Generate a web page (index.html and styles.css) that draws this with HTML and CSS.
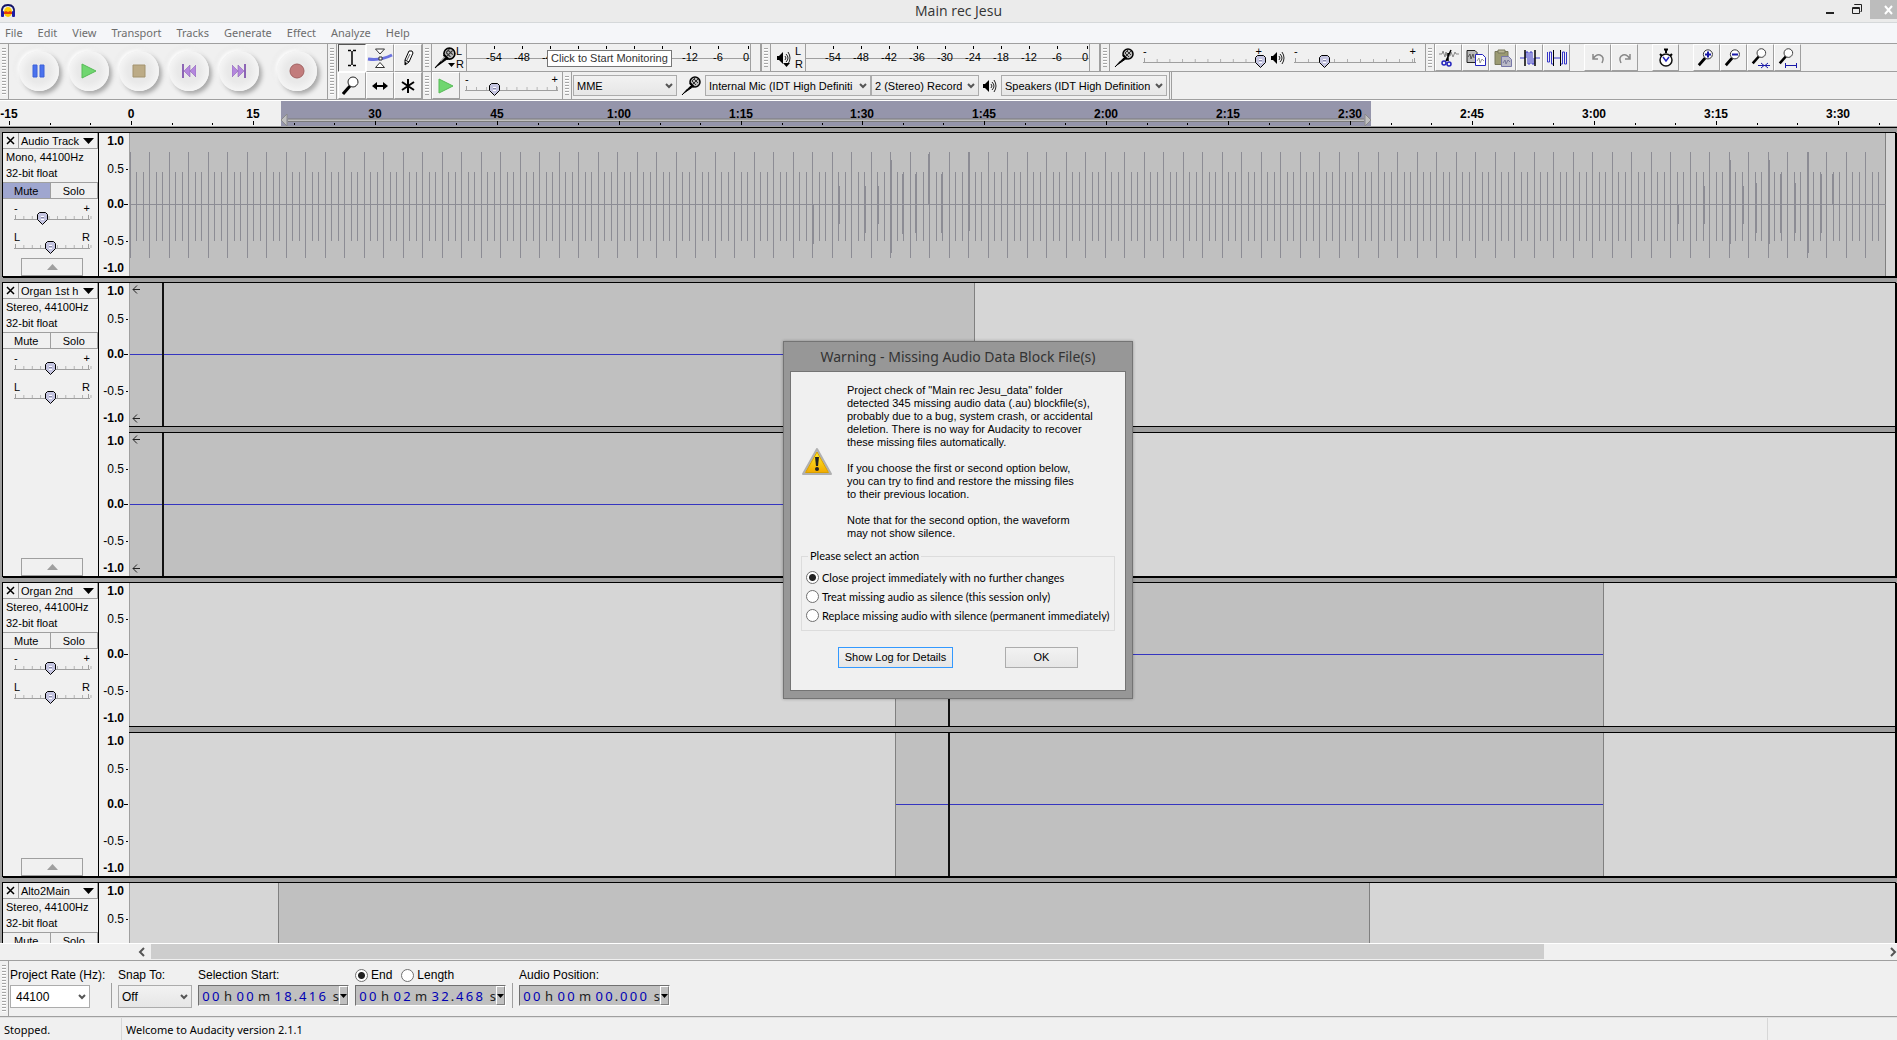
FILE: index.html
```html
<!DOCTYPE html>
<html lang="en">
<head>
    <meta charset="UTF-8">
    <meta name="viewport" content="width=device-width, initial-scale=1.0">
    <title>Main rec Jesu</title>
    <link rel="stylesheet" href="styles.css">
</head>
<body>
    <svg class="symbols" aria-hidden="true">
        <symbol id="mic" viewBox="0 0 20 20">
            <path d="M1 19 L11 8 L13 10 L3 17 Z" fill="#000" stroke="#000"/>
            <circle cx="14" cy="6" r="5" fill="#bbb" stroke="#000" stroke-width="1.500"/>
            <path d="M11 5 l4 4 M13 3 l4 4 M12 8 l5 -5 M11 5 l3 -3" stroke="#333"/>
            <path d="M9 7 l4 4" stroke="#000" stroke-width="2"/>
            <path d="M6 13 l4 -4" stroke="#aaa"/>
        </symbol>
        <symbol id="speaker" viewBox="0 0 14 14">
            <path d="M0 5 h2 l4 -4 v12 l-4 -4 h-2 z" fill="#000"/>
            <path d="M8 5 q2 2 0 4 M9 3 q4 4 0 8 M11 1 q4 6 0 12" fill="none" stroke="#222"/>
        </symbol>
        <symbol id="chevron" viewBox="0 0 8 6">
            <path d="M1 1 l3 3 l3 -3" fill="none" stroke="#555" stroke-width="2"/>
        </symbol>
        <symbol id="lens" viewBox="0 0 22 22">
            <path d="M2 19 L9 11" stroke="#000" stroke-width="3"/>
            <circle cx="12" cy="7" r="5" fill="#fff" stroke="#222"/>
            <path d="M14 11 q3 -1 3 -4" fill="none" stroke="#888"/>
        </symbol>
        <symbol id="play" viewBox="0 0 16 16">
            <path d="M1 1 L15 8 L1 15 Z" fill="#70d670" stroke="#57bb57"/>
        </symbol>
        <symbol id="prev" viewBox="0 0 14 16">
            <path d="M1 1 v14" stroke="#8d65b5" stroke-width="2"/>
            <path d="M8 2 v12 L2 8 Z M14 2 v12 L8 8 Z" fill="#b487dd" stroke="#8d65b5" stroke-width=".6"/>
        </symbol>
    </svg>

    <header class="titlebar">
        <div class="app-icon">
            <svg width="16" height="16" viewBox="0 0 16 16">
                <ellipse cx="8" cy="9" rx="4" ry="5" fill="#fc0"/>
                <path d="M4 9 l2 -1 l2 1 l2 -1 l2 1 v2 h-8 z" fill="#e33c10"/>
                <path d="M2 10 Q1 2 8 2 Q15 2 14 10" fill="none" stroke="#131368" stroke-width="2"/>
                <rect x="1" y="8" width="3" height="6" rx="1" fill="#1d1da5"/>
                <rect x="12" y="8" width="3" height="6" rx="1" fill="#1d1da5"/>
            </svg>
        </div>
        <div class="title">Main rec Jesu</div>
        <div class="window-buttons">
            <button type="button" aria-label="Minimize"><svg width="12" height="12"><path d="M2 10 h8" stroke="#222" stroke-width="2"/></svg></button>
            <button type="button" aria-label="Restore"><svg width="12" height="12"><path d="M1.500 4.500 h7 v6 h-7 z M1 5.500 h8 M3.500 2 v-.5 h7 v7 h-1" fill="none" stroke="#222"/></svg></button>
            <button type="button" class="close" aria-label="Close"><svg width="10" height="10"><path d="M1 1 l7 8 M8 1 l-7 8" stroke="#fff" stroke-width="2"/></svg></button>
        </div>
    </header>

    <nav class="menubar">
        <a href="#">File</a>
        <a href="#">Edit</a>
        <a href="#">View</a>
        <a href="#">Transport</a>
        <a href="#">Tracks</a>
        <a href="#">Generate</a>
        <a href="#">Effect</a>
        <a href="#">Analyze</a>
        <a href="#">Help</a>
    </nav>

    <div class="toolbars">
        <div class="grip"></div>
        <div class="transport">
            <button type="button" aria-label="Pause"><svg width="14" height="14"><path d="M1 1 h4 v12 h-4 z M8 1 h4 v12 h-4 z" fill="#4a72ee" stroke="#3d61d8"/></svg></button>
            <button type="button" aria-label="Play"><svg width="16" height="16"><use href="#play"/></svg></button>
            <button type="button" aria-label="Stop"><svg width="14" height="14"><path d="M1 1 h12 v12 h-12 z" fill="#bcab86" stroke="#a3936f"/></svg></button>
            <button type="button" aria-label="Skip to Start"><svg width="14" height="16"><use href="#prev"/></svg></button>
            <button type="button" aria-label="Skip to End"><svg class="flip" width="14" height="16"><use href="#prev"/></svg></button>
            <button type="button" class="record" aria-label="Record"><svg width="16" height="16"><circle cx="8" cy="8" r="7" fill="#c27c7c" stroke="#a26262"/></svg></button>
        </div>
        <div class="grip"></div>
        <div class="tools">
            <button type="button" class="tool active" aria-label="Selection Tool"><svg width="20" height="20"><path d="M6 2.500 h3 M11 2.500 h3 M6 17.500 h3 M11 17.500 h3 M10 3 v14" stroke="#000" stroke-width="1.500"/></svg></button>
            <button type="button" class="tool" aria-label="Envelope Tool"><svg width="26" height="22"><path d="M1 12 q12 2 24 -4" fill="none" stroke="#6a72e0" stroke-width="3"/><path d="M8.500 2 h9 l-4.500 5 z M8.500 20.500 h9 l-4.500 -5 z M12 10 h3 v3 h-3 z" fill="#fff" stroke="#333"/></svg></button>
            <button type="button" class="tool" aria-label="Draw Tool"><svg width="20" height="20"><path d="M7 17 l0 -5 l4 -9 h3 l1 2 l-4 9 z M7 12 l4 2" fill="#fff" stroke="#000"/><path d="M7 17 v-3 l2 1 z"/><path d="M12 6 l-3 6" stroke="#555"/></svg></button>
            <button type="button" class="tool" aria-label="Zoom Tool"><svg width="20" height="20" viewBox="1 1 20 20"><use href="#lens" width="22" height="22"/></svg></button>
            <button type="button" class="tool" aria-label="Time Shift Tool"><svg width="18" height="12"><path d="M4 6 h10" stroke="#000" stroke-width="2"/><path d="M1 6 l5 -4 v8 z M17 6 l-5 -4 v8 z"/></svg></button>
            <button type="button" class="tool" aria-label="Multi-Tool"><svg width="16" height="16"><path d="M8 1 v14 M2 4 l12 8 M14 4 l-12 8" stroke="#000" stroke-width="2"/></svg></button>
        </div>
        <div class="toolbar-rows">
            <div class="toolbar-row">
                <div class="grip"></div>
                <div class="meter-icon">
                    <svg width="22" height="22"><use href="#mic"/></svg>
                    <svg class="drop" width="7" height="4"><path d="M0 0 h7 l-3.500 4 z"/></svg>
                    <div class="lr"><span>L</span><span>R</span></div>
                </div>
                <div class="meter">
                    <span>-54</span><span>-48</span><span>-42</span><span>-36</span><span>-30</span><span>-24</span><span>-18</span><span>-12</span><span>-6</span><span class="zero">0</span>
                    <div class="tooltip">Click to Start Monitoring</div>
                </div>
                <div class="spacer"></div>
                <div class="grip"></div>
                <div class="meter-icon output">
                    <svg width="14" height="14"><use href="#speaker"/></svg>
                    <svg class="drop" width="7" height="4"><path d="M0 0 h7 l-3.500 4 z"/></svg>
                    <div class="lr"><span>L</span><span>R</span></div>
                </div>
                <div class="meter">
                    <span>-54</span><span>-48</span><span>-42</span><span>-36</span><span>-30</span><span>-24</span><span>-18</span><span>-12</span><span>-6</span><span class="zero">0</span>
                </div>
                <div class="spacer"></div>
                <div class="grip"></div>
                <div class="mixer">
                    <svg width="20" height="20"><use href="#mic"/></svg>
                    <div class="slider recording">
                        <div class="marks"><span>-</span><span>+</span></div>
                        <input type="range" value="100" aria-label="Recording Volume">
                    </div>
                    <svg width="14" height="14"><use href="#speaker"/></svg>
                    <div class="slider">
                        <div class="marks"><span>-</span><span>+</span></div>
                        <input type="range" value="24" aria-label="Playback Volume">
                    </div>
                </div>
                <div class="grip"></div>
                <div class="edit">
                    <button type="button" class="tool" aria-label="Cut"><svg width="20" height="20"><path d="M0 6 h3 l1 -3 l2 6 l1 -5 l1 4 h3 l1 -4 l2 5 l2 -5 l1 2 h3" fill="none" stroke="#888"/><path d="M7 13 L12 2 M9 13 L9 5" stroke="#000" stroke-width="1.500"/><circle cx="5" cy="15" r="2" fill="none" stroke="#2424bd" stroke-width="1.500"/><circle cx="10" cy="16" r="2" fill="none" stroke="#2424bd" stroke-width="1.500"/></svg></button>
                    <button type="button" class="tool" aria-label="Copy"><svg width="20" height="20"><path d="M1 2.500 h8 l2 2 v10 h-10 z" fill="#bbb" stroke="#222"/><path d="M2 9 l2 -3 l1 5 l2 -5 l1 4" fill="none" stroke="#555"/><path d="M9.500 6.500 h7 l3 3 v8 h-10 z" fill="#fff" stroke="#2424bd"/><path d="M11 13 l2 -3 l1 5 l2 -4 l2 2" fill="none" stroke="#999"/></svg></button>
                    <button type="button" class="tool" aria-label="Paste"><svg width="20" height="20"><path d="M2 3.500 h13 v13 h-13 z" fill="#9b9a72" stroke="#77775a"/><path d="M5 2 h7 v3 h-7 z" fill="#bbb897" stroke="#77775a"/><path d="M8.500 8.500 h7 l3 3 v7 h-10 z" fill="#b9b9c6" stroke="#7777a8"/><path d="M10 15 l2 -3 l1 4 l2 -4 l2 2" fill="none" stroke="#77779a"/></svg></button>
                    <button type="button" class="tool" aria-label="Trim"><svg width="20" height="20"><path d="M0 10 h5 M15 10 h5 M6 10 v-6 h2 v12 h2 v-12 h2 v12 h2 v-6" fill="none" stroke="#3535c8"/><path d="M5 2 v16 M15 2 v16" stroke="#000" stroke-width="1.500"/></svg></button>
                    <button type="button" class="tool" aria-label="Silence"><svg width="20" height="20"><path d="M.5 4 v10 h2 v-10 h2 v12 h2 v-12 M13.500 4 v12 h2 v-12 h2 v12 h2 v-12 M6 10 h8" fill="none" stroke="#3535c8"/><path d="M6.500 2 v16 M13.500 2 v16" stroke="#000"/></svg></button>
                    <button type="button" class="tool group" aria-label="Undo"><svg width="16" height="14"><path d="M3 3 v5 h5 M3 8 q3 -5 7 -4 q5 2 2 8" fill="none" stroke="#888" stroke-width="1.500"/></svg></button>
                    <button type="button" class="tool" aria-label="Redo"><svg class="flip" width="16" height="14"><path d="M3 3 v5 h5 M3 8 q3 -5 7 -4 q5 2 2 8" fill="none" stroke="#888" stroke-width="1.500"/></svg></button>
                    <button type="button" class="tool group" aria-label="Sync-Lock"><svg width="18" height="22"><circle cx="9" cy="13" r="6" fill="#fff" stroke="#111" stroke-width="1.500"/><path d="M7 2.500 h4 M9 2 v4 M3 7 l2 2 M15 7 l-2 2" stroke="#000" stroke-width="2"/><path d="M6 10 l3 4 l3 -4" fill="none" stroke="#2424bd" stroke-width="1.500"/></svg></button>
                    <button type="button" class="tool group" aria-label="Zoom In"><svg width="20" height="20"><use href="#lens"/><path d="M8 6.500 h6 M11 3.500 v6" stroke="#1919a8" stroke-width="2"/></svg></button>
                    <button type="button" class="tool" aria-label="Zoom Out"><svg width="20" height="20"><use href="#lens"/><path d="M8 6.500 h6" stroke="#1919a8" stroke-width="2"/></svg></button>
                    <button type="button" class="tool" aria-label="Fit Selection"><svg width="20" height="22"><use href="#lens" width="19" height="19"/><path d="M7 18.500 h12 M10 16 l3 2.500 l-3 2.500 M17 16 l-3 2.500 l3 2.500" fill="none" stroke="#1919a8"/></svg></button>
                    <button type="button" class="tool" aria-label="Fit Project"><svg width="20" height="22"><use href="#lens" width="19" height="19"/><path d="M7.500 16 v5 M18.500 16 v5 M8 18.500 h10" fill="none" stroke="#1919a8"/></svg></button>
                </div>
            </div>
            <div class="toolbar-row">
                <div class="grip"></div>
                <button type="button" class="tool wide" aria-label="Play-at-Speed"><svg width="16" height="16"><use href="#play"/></svg></button>
                <div class="slider speed">
                    <div class="marks"><span>-</span><span>+</span></div>
                    <input type="range" value="31" aria-label="Playback Speed">
                </div>
                <div class="grip"></div>
                <div class="devices">
                    <div class="combo host"><select aria-label="Audio Host"><option>MME</option></select><svg width="8" height="6"><use href="#chevron"/></svg></div>
                    <svg class="device-icon" width="20" height="20"><use href="#mic"/></svg>
                    <div class="combo device"><select aria-label="Recording Device"><option>Internal Mic (IDT High Definiti</option></select><svg width="8" height="6"><use href="#chevron"/></svg></div>
                    <div class="combo channels"><select aria-label="Recording Channels"><option>2 (Stereo) Record</option></select><svg width="8" height="6"><use href="#chevron"/></svg></div>
                    <svg class="device-icon" width="14" height="14"><use href="#speaker"/></svg>
                    <div class="combo device"><select aria-label="Playback Device"><option>Speakers (IDT High Definition</option></select><svg width="8" height="6"><use href="#chevron"/></svg></div>
                </div>
            </div>
        </div>
    </div>

    <svg class="timeline" id="timeline"></svg>

    <main class="tracks" id="tracks"></main>

    <div class="scrollbar">
        <svg width="8" height="10"><path d="M6 1 l-4 4 l4 4" fill="none" stroke="#555" stroke-width="2"/></svg>
        <div class="scroll-track"><div class="scroll-thumb" style="width: 80.4%"></div></div>
        <svg width="8" height="10"><path d="M2 1 l4 4 l-4 4" fill="none" stroke="#555" stroke-width="2"/></svg>
    </div>

    <div class="selection-bar">
        <div class="grip"></div>
        <div class="field rate">
            <label for="rate">Project Rate (Hz):</label>
            <div class="combo white"><select id="rate"><option>44100</option></select><svg width="8" height="6"><use href="#chevron"/></svg></div>
        </div>
        <div class="rule"></div>
        <div class="field snap">
            <label for="snap">Snap To:</label>
            <div class="combo"><select id="snap"><option>Off</option></select><svg width="8" height="6"><use href="#chevron"/></svg></div>
        </div>
        <div class="field">
            <div class="label">Selection Start:</div>
            <div class="time" data-time="00h00m18.416s"></div>
        </div>
        <div class="field">
            <div class="label">
                <label><input type="radio" name="end" checked>End</label>
                <label><input type="radio" name="end">Length</label>
            </div>
            <div class="time" data-time="00h02m32.468s"></div>
        </div>
        <div class="rule"></div>
        <div class="field">
            <div class="label">Audio Position:</div>
            <div class="time" data-time="00h00m00.000s"></div>
        </div>
    </div>

    <footer class="statusbar">
        <div class="state">Stopped.</div>
        <div class="message">Welcome to Audacity version 2.1.1</div>
        <div class="rate-info"></div>
    </footer>

    <div class="dialog" role="dialog" aria-labelledby="dialog-title">
        <h1 id="dialog-title">Warning - Missing Audio Data Block File(s)</h1>
        <form class="dialog-body">
            <div class="warning">
                <svg width="32" height="28" viewBox="0 0 32 28">
                    <defs><linearGradient id="amber" x1="0" y1="0" x2="0" y2="1"><stop offset="0" stop-color="#ffee2c"/><stop offset="1" stop-color="#f2ab00"/></linearGradient></defs>
                    <path d="M16 1 L30 26 H2 Z" fill="#ccc" stroke="#b0b0b0" stroke-width="2" stroke-linejoin="round"/>
                    <path d="M16 4 L27.500 24.500 H4.500 Z" fill="url(#amber)" stroke="#d9a000"/>
                    <path d="M14 9 h4 l-1 9 h-2 z" fill="#222"/>
                    <circle cx="16" cy="21" r="2" fill="#222"/>
                </svg>
                <div>
                    <p>Project check of "Main rec Jesu_data" folder<br>detected 345 missing audio data (.au) blockfile(s),<br>probably due to a bug, system crash, or accidental<br>deletion. There is no way for Audacity to recover<br>these missing files automatically.</p>
                    <p>If you choose the first or second option below,<br>you can try to find and restore the missing files<br>to their previous location.</p>
                    <p>Note that for the second option, the waveform<br>may not show silence.</p>
                </div>
            </div>
            <fieldset>
                <legend>Please select an action</legend>
                <label><input type="radio" name="action" checked>Close project immediately with no further changes</label>
                <label><input type="radio" name="action">Treat missing audio as silence (this session only)</label>
                <label><input type="radio" name="action">Replace missing audio with silence (permanent immediately)</label>
            </fieldset>
            <div class="dialog-buttons">
                <button type="button" class="focused">Show Log for Details</button>
                <button type="button" class="ok">OK</button>
            </div>
        </form>
    </div>

    <script src="script.js"></script>
</body>
</html>
```
FILE: styles.css
```css
* {
    box-sizing: border-box;
}
body {
    margin: 0;
    height: 100vh;
    display: flex;
    flex-direction: column;
    overflow: hidden;
    background-color: #f0f0f0;
    color: #000;
    font-family: "Liberation Sans", Arial, sans-serif;
    font-size: 12px;
}
button, select, input {
    font: inherit;
    color: inherit;
    margin: 0;
}
button {
    padding: 0;
}
svg {
    display: block;
    flex: none;
}
.symbols {
    position: absolute;
    width: 0;
    height: 0;
}
.flip {
    transform: scaleX(-1);
}

/* Title bar and menu */
.titlebar {
    display: flex;
    align-items: center;
    flex: none;
    height: 23px;
    background-color: #ebebeb;
    border-bottom: 1px solid #d5d8da;
}
.app-icon {
    width: 100px;
}
.title {
    flex: 1;
    text-align: center;
    font-family: "Open Sans", sans-serif;
    font-size: 14px;
    line-height: 22px;
    color: #333;
}
.window-buttons {
    display: flex;
    width: 80px;
    height: 22px;
}
.window-buttons button {
    display: flex;
    align-items: center;
    justify-content: center;
    width: 27px;
    height: 18px;
    border: none;
    background: none;
}
.window-buttons .close {
    height: 19px;
    justify-content: flex-end;
    padding-right: 3px;
    background-color: #bcbcbc;
}
.menubar {
    display: flex;
    gap: 15px;
    flex: none;
    height: 20px;
    padding-left: 5px;
    background-color: #f5f6f9;
    font-family: "Noto Sans", sans-serif;
    font-size: 11px;
    line-height: 19px;
}
.menubar a {
    color: #6d6d6d;
    text-decoration: none;
}

/* Toolbars */
.toolbars {
    display: flex;
    flex: none;
    height: 57px;
    border-top: 1px solid #9f9f9f;
    border-bottom: 1px solid #9f9f9f;
}
.grip {
    flex: none;
    width: 10px;
    border-right: 1px solid #9f9f9f;
    border-left: 1px solid #9f9f9f;
    background: repeating-linear-gradient(#a5a5a5 0 1px, #fff 1px 2px, #f0f0f0 2px 3px) content-box;
    padding: 4px 2px;
}
.toolbars > .grip:first-child {
    width: 9px;
    border-left: none;
}
.transport {
    display: flex;
    align-items: center;
    gap: 10px;
    width: 318px;
    padding: 0 0 2px 10px;
}
.transport button {
    display: flex;
    align-items: center;
    justify-content: center;
    width: 40px;
    height: 40px;
    border: none;
    border-radius: 50%;
    background: radial-gradient(circle, #e9e9e9 40%, #f6f6f6 75%);
    box-shadow: 3px 3px 4px #aaa, -2px -2px 4px #fff, -3px -3px 4px #e2e2e2;
}
.transport .record {
    margin-left: 8px;
}
.tools {
    display: grid;
    grid-template-columns: repeat(3, 28px);
    grid-template-rows: 28px 27px;
    margin-left: 1px;
}
.tool {
    display: flex;
    align-items: center;
    justify-content: center;
    width: 27px;
    border: 1px solid #9f9f9f;
    border-top-color: #fff;
    border-left-color: #fff;
    background-color: #f0f0f0;
}
.tools .tool, .tool.wide {
    width: 28px;
}
.tool.active {
    border-color: #555 #fff #fff #555;
}
.tool.group {
    margin-left: 14px;
}
.toolbar-rows {
    flex: 1;
}
.toolbar-row {
    display: flex;
    height: 28px;
    border-bottom: 1px solid #9f9f9f;
}
.toolbar-row:last-child {
    height: 27px;
    border-bottom: none;
}
.meter-icon {
    display: flex;
    align-items: center;
    width: 34px;
    padding-left: 2px;
}
.meter-icon.output {
    padding-left: 6px;
}
.meter-icon .drop {
    align-self: flex-end;
    margin: 0 0 4px -8px;
}
.meter-icon .lr {
    display: flex;
    flex-direction: column;
    margin-left: auto;
    padding-right: 2px;
    font-size: 11px;
    line-height: 13px;
}
.meter {
    position: relative;
    display: flex;
    width: 285px;
    padding-left: 13px;
    border-left: 1px solid #9f9f9f;
    border-right: 1px solid #9f9f9f;
    background: linear-gradient(#9f9f9f, #9f9f9f) 0 14px / 100% 1px no-repeat;
    font-size: 11px;
    line-height: 26px;
}
.meter span {
    flex: none;
    width: 28px;
    text-align: center;
    background: linear-gradient(#000, #000) center 2px / 1px 3px no-repeat;
}
.meter .zero {
    width: 17px;
    text-align: right;
    background-position: right 2px;
}
.tooltip {
    position: absolute;
    top: 6px;
    left: 80px;
    height: 17px;
    padding: 0 3px;
    border: 1px solid #767676;
    background-color: #fff;
    font-size: 11px;
    line-height: 15px;
    white-space: nowrap;
    color: #333;
}
.spacer {
    width: 10px;
    border-right: 1px solid #9f9f9f;
}
.mixer {
    display: flex;
    align-items: center;
    gap: 5px;
    width: 315px;
    padding-left: 4px;
}
.slider {
    width: 130px;
}
.slider.recording {
    width: 127px;
}
.slider .marks {
    display: flex;
    justify-content: space-between;
    height: 7px;
    padding: 0 4px;
    font-size: 11px;
    line-height: 8px;
}
.slider input {
    appearance: none;
    display: block;
    width: 100%;
    height: 14px;
    background:
        linear-gradient(#9f9f9f, #9f9f9f) 4px 8px / calc(100% - 8px) 1px no-repeat,
        linear-gradient(#9f9f9f, #9f9f9f) calc(100% - 5px) 4px / 1px 4px no-repeat,
        linear-gradient(#9f9f9f, #9f9f9f) 5px 4px / 1px 4px no-repeat,
        linear-gradient(90deg, #b0b0b0 1px, transparent 1px) 5px 5px / 10% 3px repeat-x;
}
.slider input::-webkit-slider-thumb {
    appearance: none;
    width: 11px;
    height: 13px;
    background: url('data:image/svg+xml,<svg xmlns="http://www.w3.org/2000/svg" width="11" height="13"><path d="M2.500 .5h6l2 2v5l-5 5l-5-5v-5z" fill="%23c4c4e0" stroke="%23000"/><path d="M4 4.500h3M4 7.500h3" stroke="%23fff"/><path d="M4 5.500h3" stroke="%238888a8"/></svg>') no-repeat;
}
.speed {
    width: 102px;
    padding: 3px 0 0 1px;
}
.edit {
    display: flex;
}
.devices {
    display: flex;
    align-items: center;
    width: 600px;
    padding: 0 2px 0 1px;
    border-right: 3px double #9f9f9f;
    font-size: 11px;
}
.device-icon {
    margin: 0 auto;
}
.combo {
    display: grid;
    align-items: center;
    flex: none;
}
.combo select {
    grid-area: 1 / 1;
    appearance: none;
    width: 100%;
    height: 21px;
    padding: 0 16px 0 3px;
    border: 1px solid #acacac;
    border-radius: 0;
    background: linear-gradient(#f2f2f2, #e6e6e6);
}
.combo svg {
    grid-area: 1 / 1;
    justify-self: end;
    margin-right: 4px;
    pointer-events: none;
}
.host {
    width: 104px;
}
.device {
    width: 166px;
}
.channels {
    width: 108px;
}

/* Time ruler */
.timeline {
    width: 100%;
    height: 28px;
    border-top: 1px solid #fff;
    border-bottom: 1px solid #000;
    font-size: 12px;
    font-weight: bold;
}

/* Tracks */
.tracks {
    flex: 1;
    min-height: 0;
    overflow: hidden;
    padding: 4px 1px 0 2px;
    background-color: #9f9f9f;
}
.track {
    display: flex;
    margin-bottom: 5px;
    border: 1px solid #000;
    box-shadow: 1px 1px 0 #000;
}
.panel {
    display: flex;
    flex-direction: column;
    width: 96px;
    border-right: 1px solid #000;
    background-color: #f0f0f0;
    font-size: 11px;
}
.panel-title {
    display: flex;
    height: 16px;
    border-bottom: 1px solid #9f9f9f;
}
.panel-title button {
    display: flex;
    align-items: center;
    border: none;
    border-right: 1px solid #9f9f9f;
    background: none;
}
.panel-title .remove {
    justify-content: center;
    width: 16px;
}
.panel-title .name {
    flex: 1;
    justify-content: space-between;
    padding: 0 3px 0 2px;
}
.info {
    height: 33px;
    padding: 0 3px;
    line-height: 16px;
}
.mute-solo {
    display: flex;
    height: 17px;
    border-top: 1px solid #9f9f9f;
    border-bottom: 1px solid #9f9f9f;
}
.mute-solo button {
    flex: 1;
    border: none;
    border-right: 1px solid #9f9f9f;
    background: none;
    line-height: 14px;
}
.mute-solo .on {
    background-color: #9fa6cf;
}
.panel .slider {
    width: 84px;
    margin: 5px 0 3px 7px;
}
.collapse {
    display: flex;
    align-items: center;
    justify-content: center;
    width: 62px;
    height: 18px;
    margin: auto 0 0 18px;
    border: 1px solid #9f9f9f;
    background: none;
}
.channel-list {
    flex: 1;
    background-color: #f0f0f0;
}
.channel {
    display: flex;
    height: 143px;
}
.divider {
    height: 7px;
    margin-left: 30px;
    border-top: 1px solid #000;
    border-bottom: 1px solid #000;
    background-color: #9f9f9f;
}
.scale {
    display: grid;
    grid-template-rows: 16px 40px 30px 44px 10px;
    align-items: center;
    width: 31px;
    padding-right: 1px;
    border-right: 1px solid #9f9f9f;
    text-align: right;
}
.scale span {
    padding-right: 4px;
    background: linear-gradient(#000, #000) right center / 2px 1px no-repeat;
}
.scale .major {
    font-weight: bold;
    background-size: 4px 1px;
}
.scale .major:first-child, .scale .major:last-child {
    background: none;
}
.wave {
    flex: 1;
    background-color: #d6d6d6;
    overflow: hidden;
}
.clip {
    position: relative;
    height: 100%;
    border-right: 1px solid #808080;
    background: linear-gradient(#3535c0, #3535c0) 0 71px / 100% 1px no-repeat #c0c0c0;
}
.clip.muted {
    background-image: none;
}
.clip.late {
    border-left: 1px solid #808080;
}
.cut {
    position: absolute;
    top: 0;
    width: 2px;
    height: 100%;
    background-color: #111;
}
.overflow-marks {
    display: flex;
    flex-direction: column;
    justify-content: space-between;
    height: 100%;
    padding: 2px 0 3px 2px;
}

/* Scrollbar */
.scrollbar {
    display: flex;
    align-items: center;
    flex: none;
    height: 17px;
    padding-left: 138px;
    border-top: 1px solid #fff;
}
.scroll-track {
    flex: 1;
    height: 16px;
    margin: 0 5px;
}
.scroll-thumb {
    height: 15px;
    background-color: #cdcdcd;
}

/* Selection toolbar */
.selection-bar {
    display: flex;
    flex: none;
    height: 57px;
    border-top: 1px solid #9f9f9f;
    border-bottom: 1px solid #9f9f9f;
}
.selection-bar .grip {
    width: 9px;
    margin-right: 1px;
    border-left: none;
}
.field {
    padding-top: 5px;
    margin-right: 6px;
}
.field > label, .field .label {
    display: flex;
    align-items: center;
    height: 18px;
    margin-bottom: 1px;
    white-space: nowrap;
}
.label label {
    display: flex;
    align-items: center;
    margin-right: 9px;
}
.rate .combo {
    width: 80px;
}
.rate {
    width: 95px;
}
.snap .combo {
    width: 74px;
}
.field .combo select {
    height: 23px;
}
.combo.white select {
    background: #fff;
    padding-left: 5px;
}
.rule {
    width: 1px;
    height: 25px;
    margin: 22px 6px 0 0;
    background-color: #9f9f9f;
}
input[type="radio"] {
    appearance: none;
    flex: none;
    width: 13px;
    height: 13px;
    margin: 0 3px 0 0;
    border: 1px solid #707070;
    border-radius: 50%;
    background-color: #fff;
}
input[type="radio"]:checked {
    background: radial-gradient(circle, #222 3px, #fff 4px);
}
.time {
    display: flex;
    width: 151px;
    height: 21px;
    padding-left: 2px;
    border: 1px solid #707070;
    border-right-color: #fff;
    border-bottom-color: #fff;
    background-color: #c0c0c0;
    font-family: "Noto Sans", sans-serif;
    font-size: 13px;
    line-height: 20px;
    color: #222;
    text-align: center;
}
.time .digit {
    width: 10px;
    color: #0000b4;
}
.time .h {
    width: 15px;
}
.time .m {
    width: 19px;
}
.time .s {
    width: 12px;
    text-align: right;
}
.time .point {
    width: 5px;
}
.time button {
    display: flex;
    align-items: center;
    width: 9px;
    margin-left: auto;
    border: 1px solid #808080;
    border-top-color: #fff;
    border-left-color: #fff;
    background-color: #c0c0c0;
}

/* Status bar */
.statusbar {
    display: flex;
    flex: none;
    height: 23px;
    border-top: 1px solid #e0e0e0;
    font-family: "Noto Sans", sans-serif;
    font-size: 11px;
    line-height: 24px;
}
.state {
    width: 121px;
    padding-left: 4px;
}
.message {
    flex: 1;
    padding-left: 4px;
    border-left: 1px solid #d7d7d7;
}
.rate-info {
    width: 130px;
    border-left: 1px solid #d7d7d7;
}

/* Warning dialog */
.dialog {
    position: absolute;
    top: 341px;
    left: 783px;
    width: 350px;
    padding: 0 6px 7px;
    border: 1px solid #747474;
    background-color: #979797;
    box-shadow: 0 0 3px rgba(0, 0, 0, 0.3);
    font-size: 11px;
    line-height: 13px;
}
.dialog h1 {
    margin: 0;
    font-family: "Noto Sans", sans-serif;
    font-size: 14px;
    font-weight: normal;
    line-height: 29px;
    text-align: center;
    color: #333;
}
.dialog-body {
    height: 320px;
    padding: 12px 10px;
    border: 1px solid #747474;
    background-color: #f0f0f0;
}
.warning {
    display: flex;
    align-items: center;
    gap: 14px;
    white-space: nowrap;
}
.warning p {
    margin: 0 0 13px;
}
.warning p:last-child {
    margin-bottom: 0;
}
fieldset {
    min-width: 0;
    margin: 9px 0 0;
    padding: 5px 4px;
    border: 1px solid #dcdcdc;
    font-family: Lato, sans-serif;
}
legend {
    height: 14px;
    margin-left: 2px;
    padding: 0 2px;
}
fieldset label {
    display: flex;
    align-items: center;
    height: 19px;
    white-space: nowrap;
}
.dialog-buttons {
    display: flex;
    gap: 52px;
    margin: 16px 0 0 37px;
}
.dialog-buttons button {
    width: 115px;
    height: 21px;
    border: 1px solid #acacac;
    background: linear-gradient(#f2f2f2, #e6e6e6);
}
.dialog-buttons .focused {
    border-color: #3399ff;
}
.dialog-buttons .ok {
    width: 73px;
}
```
FILE: script.js
```js
const tracks = [
    { name: 'Audio Track', format: 'Mono', muted: true, gain: 37, channels: 1, start: 0, end: 1756, clicks: true },
    { name: 'Organ 1st h', format: 'Stereo', gain: 48, channels: 2, start: 0, end: 845, cut: 32, marks: true },
    { name: 'Organ 2nd', format: 'Stereo', gain: 48, channels: 2, start: 765, end: 1474, cut: 52 },
    { name: 'Alto2Main', format: 'Stereo', gain: 48, channels: 2, start: 148, end: 1240 }
];

// Louder samples beside the regular clicks: x, top, bottom
const peaks = [
    [683, 71, 111], [709, 53, 91], [735, 53, 100], [748, 53, 91], [761, 27, 120],
    [772, 41, 101], [785, 41, 100], [798, 21, 71], [811, 41, 100], [839, 19, 98],
    [1548, 71, 91], [1574, 53, 91], [1600, 27, 111], [1613, 53, 91], [1626, 50, 100],
    [1639, 27, 111], [1650, 41, 100], [1665, 50, 100], [1678, 19, 120], [1691, 41, 100], [1702, 41, 71]
];

function drawClicks() {
    let path = 'M0 71h1756v1H0z';
    for (let i = 0; i < 270; i++) {
        const x = Math.floor(i * 6.5);
        path += i % 3 === 0 ? `M${x} 19h1v106h-1z` : `M${x} 39h1v69h-1z`;
    }
    peaks.forEach(([x, top, bottom]) => {
        path += `M${x} ${top}h1v${bottom - top}h-1z`;
    });
    return `<svg width="1756" height="143"><path d="${path}" fill="#8c8c94"/></svg>`;
}

function slider(left, right, value, label) {
    return `<div class="slider">
        <div class="marks"><span>${left}</span><span>${right}</span></div>
        <input type="range" value="${value}" aria-label="${label}">
    </div>`;
}

function channel(track) {
    const arrow = '<svg width="8" height="9"><path d="M1 4.5h7M5 .5l-4 4l4 4" fill="none" stroke="#222"/></svg>';
    let inside = '';
    if (track.clicks) inside += drawClicks();
    if (track.marks) inside += `<div class="overflow-marks">${arrow}${arrow}</div>`;
    if (track.cut) inside += `<div class="cut" style="left: ${track.cut}px"></div>`;
    return `<div class="channel">
        <div class="scale">
            <span class="major">1.0</span><span>0.5</span><span class="major">0.0</span><span>-0.5</span><span class="major">-1.0</span>
        </div>
        <div class="wave">
            <div class="clip ${track.clicks ? 'muted' : ''} ${track.start ? 'late' : ''}" style="margin-left: ${track.start}px; width: ${track.end - track.start}px">${inside}</div>
        </div>
    </div>`;
}

document.getElementById('tracks').innerHTML = tracks.map(track => `
    <section class="track">
        <div class="panel">
            <div class="panel-title">
                <button type="button" class="remove" aria-label="Close track"><svg width="9" height="9"><path d="M1 1l7 7M8 1l-7 7" stroke="#000" stroke-width="1.5"/></svg></button>
                <button type="button" class="name">${track.name}<svg width="11" height="6"><path d="M0 0h11l-5.5 6z"/></svg></button>
            </div>
            <div class="info">${track.format}, 44100Hz<br>32-bit float</div>
            <div class="mute-solo">
                <button type="button" class="${track.muted ? 'on' : ''}">Mute</button>
                <button type="button">Solo</button>
            </div>
            ${slider('-', '+', track.gain, 'Gain')}
            ${slider('L', 'R', 48, 'Pan')}
            <button type="button" class="collapse" aria-label="Collapse"><svg width="11" height="6"><path d="M0 6h11l-5.5 -6z" fill="#9f9f9f"/></svg></button>
        </div>
        <div class="channel-list">
            ${Array(track.channels).fill(channel(track)).join('<div class="divider"></div>')}
        </div>
    </section>`).join('');

// Time ruler, 15 seconds between labels
const zero = 131;
const step = 121.9;
let ruler = `<rect x="281" y="0" width="1090" height="25" fill="#9595ab"/>
    <path d="M288 18h1076v3H288z" fill="#c0c0c0"/><path d="M288 18h1076M288 20.5h1076" stroke="#7a7a7a"/>
    <path d="M287 13v12l-6 -6z M1365 13v12l6 -6z" fill="#c0c0c0" stroke="#8a8a8a"/>
    <path d="M0 25h4000v1H0z" fill="#9f9f9f"/>`;
for (let i = -1; i < 15; i++) {
    const x = Math.round(zero + i * step);
    const seconds = Math.abs(i * 15);
    const minutes = Math.floor(seconds / 60);
    const text = minutes ? `${minutes}:${String(seconds % 60).padStart(2, '0')}` : i * 15;
    ruler += `<text x="${x}" y="17" text-anchor="middle">${text}</text><rect x="${x}" y="20" width="1" height="4"/>`;
    for (let k = 1; k < 3; k++) {
        ruler += `<rect x="${Math.round(x + k * step / 3)}" y="22" width="1" height="2"/>`;
    }
}
document.getElementById('timeline').innerHTML = ruler;

// Time boxes get one cell per digit
document.querySelectorAll('.time').forEach(box => {
    box.innerHTML = [...box.dataset.time].map(c => {
        if (/\d/.test(c)) return `<span class="digit">${c}</span>`;
        if (c === '.') return '<span class="point">.</span>';
        return `<span class="${c}">${c}</span>`;
    }).join('') + '<button type="button" aria-label="Time format"><svg width="7" height="4"><path d="M0 0h7l-3.5 4z"/></svg></button>';
});
```
